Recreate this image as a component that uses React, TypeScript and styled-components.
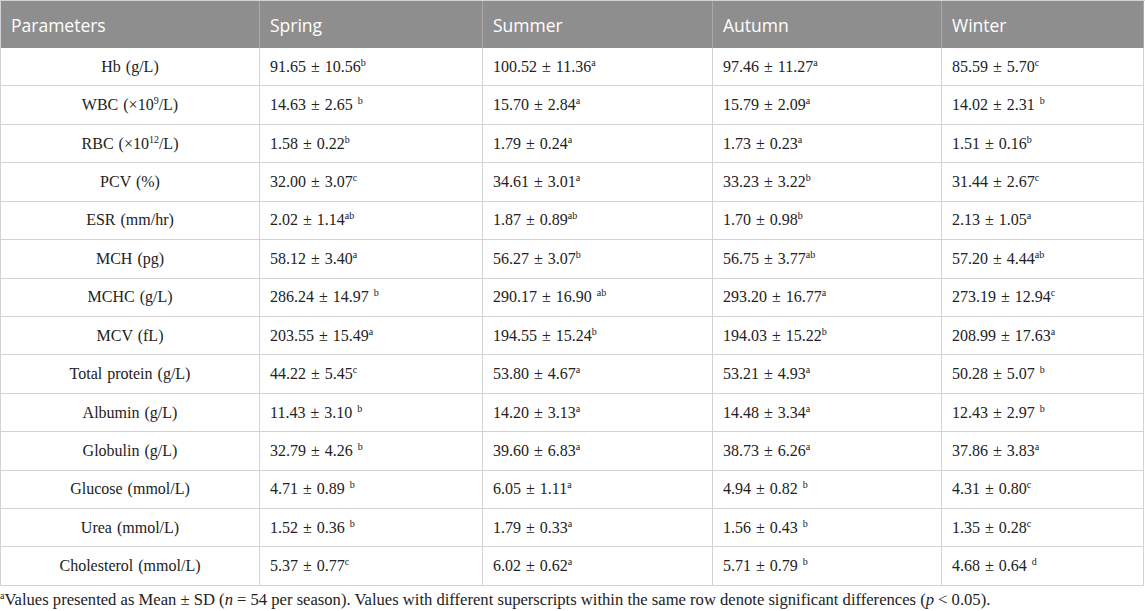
import React from 'react';
import styled, { createGlobalStyle } from 'styled-components';

const GlobalStyle = createGlobalStyle`
  html, body {
    margin: 0;
    padding: 0;
    background: #ffffff;
  }
`;

type Value = { v: string; sup: string; gap?: boolean };
type Row = { label: React.ReactNode; values: Value[] };

const v = (text: string, sup: string, gap = false): Value => ({ v: text, sup, gap });

const rows: Row[] = [
  { label: 'Hb (g/L)', values: [v('91.65 ± 10.56', 'b'), v('100.52 ± 11.36', 'a'), v('97.46 ± 11.27', 'a'), v('85.59 ± 5.70', 'c')] },
  { label: <>WBC (×10<sup>9</sup>/L)</>, values: [v('14.63 ± 2.65', 'b', true), v('15.70 ± 2.84', 'a'), v('15.79 ± 2.09', 'a'), v('14.02 ± 2.31', 'b', true)] },
  { label: <>RBC (×10<sup>12</sup>/L)</>, values: [v('1.58 ± 0.22', 'b'), v('1.79 ± 0.24', 'a'), v('1.73 ± 0.23', 'a'), v('1.51 ± 0.16', 'b')] },
  { label: 'PCV (%)', values: [v('32.00 ± 3.07', 'c'), v('34.61 ± 3.01', 'a'), v('33.23 ± 3.22', 'b'), v('31.44 ± 2.67', 'c')] },
  { label: 'ESR (mm/hr)', values: [v('2.02 ± 1.14', 'ab'), v('1.87 ± 0.89', 'ab'), v('1.70 ± 0.98', 'b'), v('2.13 ± 1.05', 'a')] },
  { label: 'MCH (pg)', values: [v('58.12 ± 3.40', 'a'), v('56.27 ± 3.07', 'b'), v('56.75 ± 3.77', 'ab'), v('57.20 ± 4.44', 'ab')] },
  { label: 'MCHC (g/L)', values: [v('286.24 ± 14.97', 'b', true), v('290.17 ± 16.90', 'ab', true), v('293.20 ± 16.77', 'a'), v('273.19 ± 12.94', 'c')] },
  { label: 'MCV (fL)', values: [v('203.55 ± 15.49', 'a'), v('194.55 ± 15.24', 'b'), v('194.03 ± 15.22', 'b'), v('208.99 ± 17.63', 'a')] },
  { label: 'Total protein (g/L)', values: [v('44.22 ± 5.45', 'c'), v('53.80 ± 4.67', 'a'), v('53.21 ± 4.93', 'a'), v('50.28 ± 5.07', 'b', true)] },
  { label: 'Albumin (g/L)', values: [v('11.43 ± 3.10', 'b', true), v('14.20 ± 3.13', 'a'), v('14.48 ± 3.34', 'a'), v('12.43 ± 2.97', 'b', true)] },
  { label: 'Globulin (g/L)', values: [v('32.79 ± 4.26', 'b', true), v('39.60 ± 6.83', 'a'), v('38.73 ± 6.26', 'a'), v('37.86 ± 3.83', 'a')] },
  { label: 'Glucose (mmol/L)', values: [v('4.71 ± 0.89', 'b', true), v('6.05 ± 1.11', 'a'), v('4.94 ± 0.82', 'b', true), v('4.31 ± 0.80', 'c')] },
  { label: 'Urea (mmol/L)', values: [v('1.52 ± 0.36', 'b', true), v('1.79 ± 0.33', 'a'), v('1.56 ± 0.43', 'b', true), v('1.35 ± 0.28', 'c')] },
  { label: 'Cholesterol (mmol/L)', values: [v('5.37 ± 0.77', 'c'), v('6.02 ± 0.62', 'a'), v('5.71 ± 0.79', 'b', true), v('4.68 ± 0.64', 'd', true)] },
];

const headers = ['Parameters', 'Spring', 'Summer', 'Autumn', 'Winter'];

const Page = styled.div`
  width: 1145px;
  font-family: 'Liberation Serif', 'Times New Roman', serif;
  color: #222222;
`;

const Grid = styled.div`
  display: grid;
  grid-template-columns: 259px 223px 230px 229px 202px;
  grid-template-rows: 47px;
  grid-auto-rows: 38.43px;
  width: 1144px;
  border-top: 1px solid #d3d3d3;
  border-left: 1px solid #d3d3d3;
`;

const HeadCell = styled.div`
  display: flex;
  align-items: center;
  padding: 0 10px;
  background: #8e8e8e;
  color: #ffffff;
  font-family: 'Open Sans', 'Noto Sans', sans-serif;
  font-size: 17.5px;
  border-right: 1px solid #a8a8a8;
  &:last-child {
    border-right-color: #d3d3d3;
  }
`;

const Cell = styled.div<{ $center?: boolean }>`
  display: flex;
  align-items: center;
  justify-content: ${(p) => (p.$center ? 'center' : 'flex-start')};
  padding: 0 10px;
  font-size: 16px;
  white-space: nowrap;
  border-right: 1px solid #d3d3d3;
  border-bottom: 1px solid #d3d3d3;
  box-sizing: border-box;
`;

const CellText = styled.span`
  line-height: 20px;
  word-spacing: 1px;

  sup {
    font-size: 10px;
    line-height: 0;
    vertical-align: 6px;
  }
`;

const Note = styled.p`
  margin: 4px 0 0;
  font-size: 16.6px;
  line-height: 20px;
  color: #222222;
  white-space: nowrap;

  sup {
    font-size: 10px;
    line-height: 0;
    vertical-align: 6px;
  }
`;

export default function App() {
  return (
    <Page>
      <GlobalStyle />
      <Grid>
        {headers.map((h) => (
          <HeadCell key={h}>{h}</HeadCell>
        ))}
        {rows.map((row, i) => (
          <React.Fragment key={i}>
            <Cell $center>
              <CellText>{row.label}</CellText>
            </Cell>
            {row.values.map((val, j) => (
              <Cell key={j}>
                <CellText>
                  {val.v}
                  {val.gap ? ' ' : ''}
                  <sup>{val.sup}</sup>
                </CellText>
              </Cell>
            ))}
          </React.Fragment>
        ))}
      </Grid>
      <Note>
        <sup>a</sup>Values presented as Mean ± SD (<i>n</i> = 54 per season). Values with different superscripts
        within the same row denote significant differences (<i>p</i> &lt; 0.05).
      </Note>
    </Page>
  );
}
